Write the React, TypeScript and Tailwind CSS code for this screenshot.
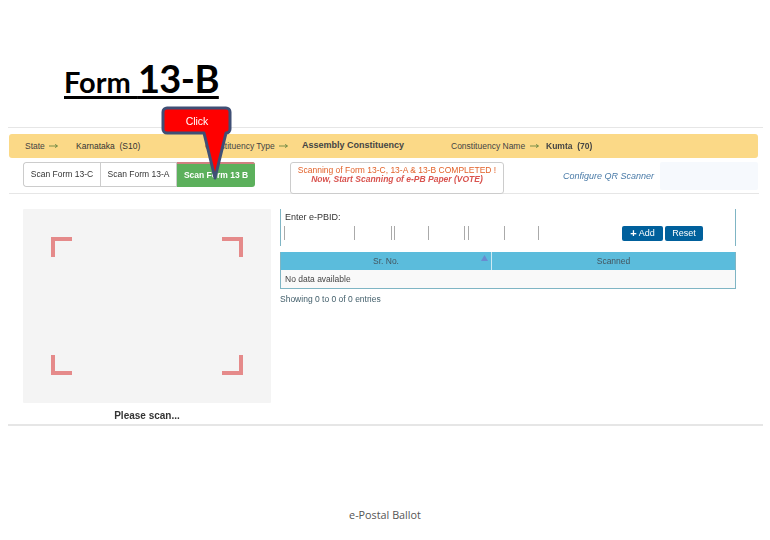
import React from "react";

const ticks = [284, 354, 391, 394, 428, 464, 468, 504, 538];

function Corner({ cls }: { cls: string }) {
  return <div className={"w-[21px] h-[20px] border-[#e58a8a] " + cls} />;
}

function Arrow() {
  return (
    <svg width="9" height="6" viewBox="0 0 9 6" className="inline-block ml-[2px] text-[#5a7d3a]">
      <path d="M0 3H8M6 1.4 8.6 3 6 4.6" fill="none" stroke="currentColor" strokeWidth="0.8" />
    </svg>
  );
}

export default function App() {
  return (
    <div className="relative w-[770px] h-[540px] bg-white overflow-hidden font-['Liberation_Sans',sans-serif] text-[#333]">
      <div className="h-[59px]" />
      <div className="pl-[64px] h-[38px] flex items-end">
        <span className="font-['Lato',sans-serif] font-bold text-black underline decoration-[3px] underline-offset-[3px] leading-none whitespace-pre">
          <span className="text-[29px]">Form </span>
          <span className="text-[38px] tracking-[-0.6px]">13-B</span>
        </span>
      </div>

      <div className="mt-[30px] ml-[8px] w-[755px] h-[299px] border-t border-b-2 border-[#e6e6e6] blur-[0.4px]">
        <div className="mt-[6px] ml-[1px] w-[749px] h-[24px] bg-[#fbd987] rounded-[3px] flex items-center text-[8.5px] text-[#444] whitespace-nowrap">
          <span className="ml-[16px] w-[51px] shrink-0">State <Arrow /></span>
          <span className="w-[129px] shrink-0 font-medium text-[#333]">Karnataka &nbsp;(S10)</span>
          <span className="w-[97px] shrink-0">Constituency Type <Arrow /></span>
          <span className="w-[149px] shrink-0 font-bold text-[9px]">Assembly Constituency</span>
          <span className="w-[95px] shrink-0">Constituency Name <Arrow /></span>
          <span className="font-bold text-[8.5px]">Kumta &nbsp;(70)</span>
        </div>

        <div className="flex items-start mt-[4px] ml-[15px]">
          <div className="flex w-[232px] h-[25px] rounded-[3px] text-[8.5px] overflow-hidden">
            <div className="w-[77px] border border-r-0 border-[#ccc] rounded-l-[3px] flex items-center justify-center">Scan Form 13-C</div>
            <div className="w-[77px] border border-[#ccc] flex items-center justify-center">Scan Form 13-A</div>
            <div className="w-[78px] bg-[#5cb05c] border-t-2 border-[#d08080] text-white font-bold flex items-center justify-center">Scan Form 13 B</div>
          </div>
          <div className="ml-[35px] w-[214px] h-[32px] border border-[#ccc] rounded-[3px] text-[8.5px] leading-[9px] text-center pt-[3px] text-[#e2622a]">
            <div>Scanning of Form 13-C, 13-A &amp; 13-B COMPLETED !</div>
            <div className="font-bold italic text-[#d9534f]">Now, Start Scanning of e-PB Paper (VOTE)</div>
          </div>
          <div className="ml-[59px] mt-[8px] w-[92px] text-[9px] italic text-[#4a7ba8] whitespace-nowrap">Configure QR Scanner</div>
          <div className="ml-[5px] w-[98px] h-[28px] bg-[#f6f9fd] rounded-[2px]" />
        </div>
        <div className="mt-[-1px] ml-[1px] w-[750px] border-t border-[#e6e6e6]" />

        <div className="flex items-start mt-[15px] ml-[15px]">
          <div className="w-[248px]">
            <div className="h-[194px] bg-[#f4f4f4] rounded-[1px] px-[28px] py-[28px] flex flex-col justify-between">
              <div className="flex justify-between">
                <Corner cls="border-t-4 border-l-4" />
                <Corner cls="border-t-4 border-r-4" />
              </div>
              <div className="flex justify-between">
                <Corner cls="border-b-4 border-l-4" />
                <Corner cls="border-b-4 border-r-4" />
              </div>
            </div>
            <div className="mt-[7px] text-center text-[10px] font-bold text-[#333] leading-[12px]">Please scan...</div>
          </div>

          <div className="ml-[9px] w-[456px]">
            <div className="h-[37px] border-x border-[#7fb5c4] pl-[4px] pt-[3px]">
              <div className="text-[9px] leading-[11px] text-[#333]">Enter e-PBID:</div>
              <div className="flex justify-between items-start mt-[3px]">
                <div className="relative h-[16px] w-[270px]">
                  {ticks.map((x) => (
                    <span key={x} className="absolute top-0 w-px h-[14px] bg-[#aaa]" style={{ left: x - 285 }} />
                  ))}
                </div>
                <div className="flex gap-[2px] mr-[32px] text-[9px] text-white">
                  <div className="w-[41px] h-[15px] bg-[#00609c] rounded-[2px] flex items-center justify-center">
                    <span className="font-bold text-[11px] leading-none mr-[2px]">+</span>Add
                  </div>
                  <div className="w-[38px] h-[15px] bg-[#00609c] rounded-[2px] flex items-center justify-center">Reset</div>
                </div>
              </div>
            </div>

            <div className="mt-[6px] border border-[#7fb5c4] border-t-0 text-[8.5px]">
              <div className="flex h-[18px] bg-[#5bbcdc] text-[#44555f] font-medium">
                <div className="w-[211px] relative flex items-center justify-center border-r border-[#cfeaf3]">
                  Sr. No.
                  <svg className="absolute right-[3px] top-[3px]" width="7" height="6" viewBox="0 0 7 6">
                    <path d="M3.5 0 7 6H0Z" fill="#6a8bd0" />
                  </svg>
                </div>
                <div className="flex-1 flex items-center justify-center">Scanned</div>
              </div>
              <div className="h-[18px] bg-[#f9f9f9] flex items-center pl-[4px] text-[#444]">No data available</div>
            </div>
            <div className="mt-[5px] text-[8.5px] leading-[11px] text-[#44606c]">Showing 0 to 0 of 0 entries</div>
          </div>
        </div>
      </div>

      <div className="absolute left-0 right-0 top-[508px] text-center text-[10.8px] leading-[13px] text-[#555] font-['Open_Sans',sans-serif]">e-Postal Ballot</div>

      <svg className="absolute left-[160px] top-[105px]" width="76" height="78" viewBox="0 0 76 78">
        <path d="M7 3H66a4 4 0 0 1 4 4V24a4 4 0 0 1-4 4L55 73 44 28H7a4 4 0 0 1-4-4V7a4 4 0 0 1 4-4Z" fill="#ff0000" stroke="#3f4f75" strokeWidth="3" strokeLinejoin="round" />
      </svg>
      <div className="absolute left-[163px] w-[68px] top-[115px] text-center text-[10.5px] leading-[12px] text-white">Click</div>
    </div>
  );
}
